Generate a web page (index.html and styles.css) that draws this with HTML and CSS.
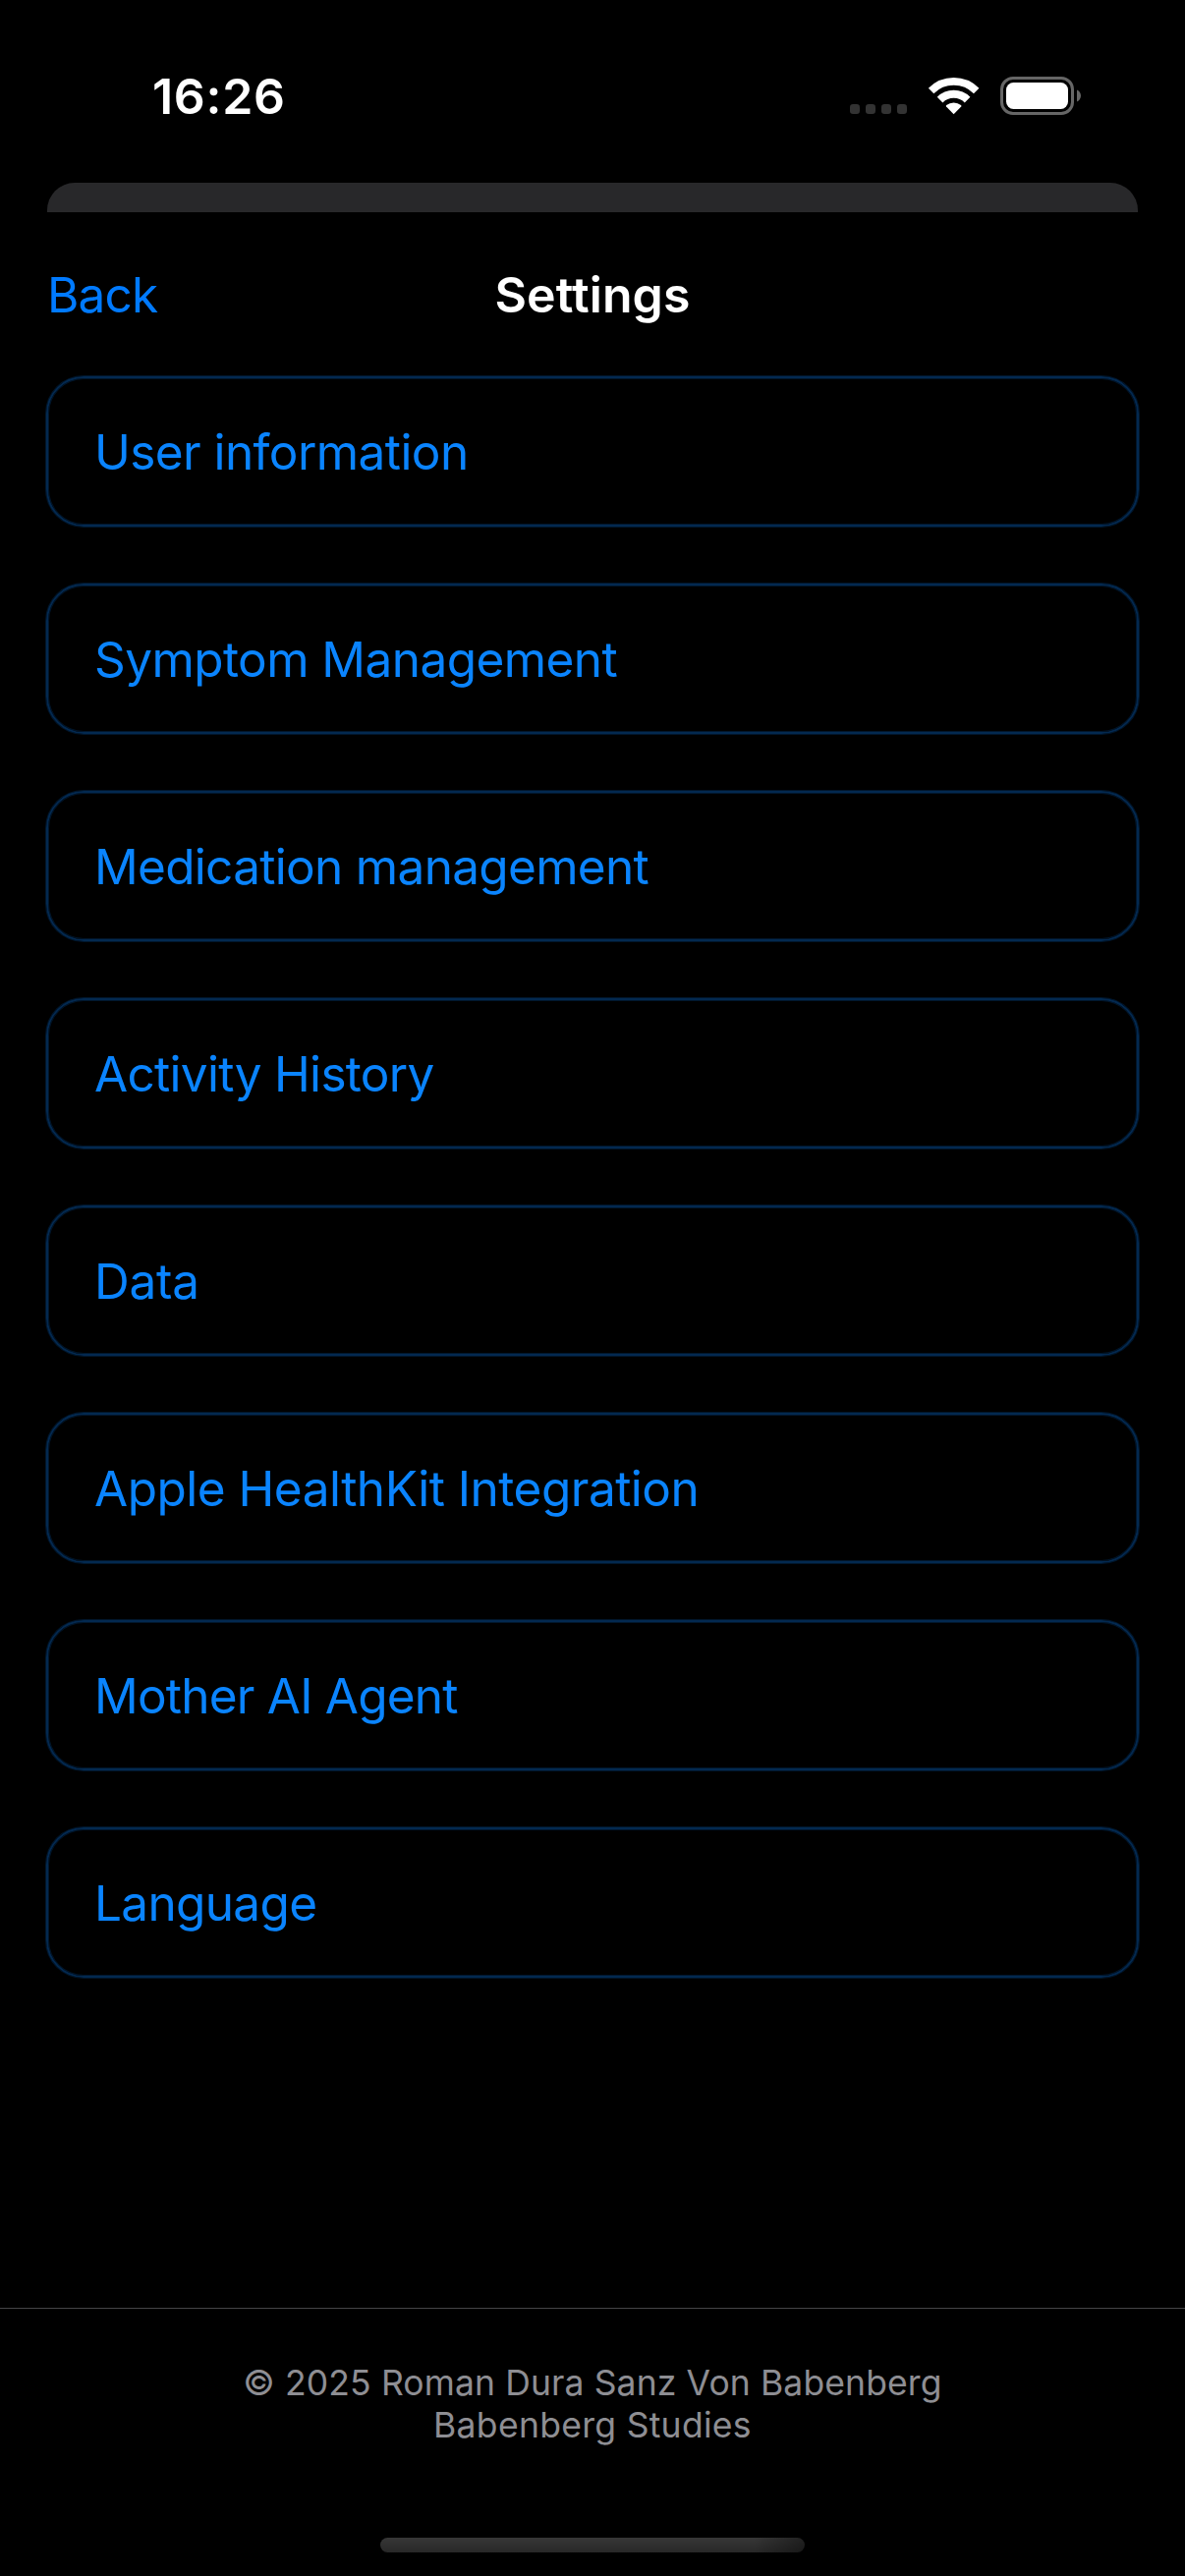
FILE: index.html
```html
<!DOCTYPE html>
<html lang="en">
<head>
<meta charset="utf-8">
<title>Settings</title>
<link rel="stylesheet" href="styles.css">
</head>
<body>
<div class="screen">
  <div class="status">
    <span class="time">16:26</span>
    <svg class="indicators" width="236" height="39" viewBox="865 78 236 39" aria-hidden="true">
      <g fill="#333">
        <rect x="865" y="106" width="10" height="10" rx="3.2"/>
        <rect x="881" y="106" width="10" height="10" rx="3.2"/>
        <rect x="897" y="106" width="10" height="10" rx="3.2"/>
        <rect x="913" y="106" width="10" height="10" rx="3.2"/>
      </g>
      <g fill="none" stroke="#fff">
        <path stroke-width="7.7" d="M947.6 92.5A32.6 32.6 0 0 1 993.7 92.5"/>
        <path stroke-width="8" d="M956.6 101.6A19.8 19.8 0 0 1 984.6 101.6"/>
      </g>
      <path fill="#fff" d="M970.6 116.2L963 108.6Q962.4 107.8 963.2 107.1A11.6 11.6 0 0 1 978 107.1Q978.8 107.8 978.2 108.6Z"/>
      <rect x="1019.5" y="79.5" width="72" height="36" rx="11.5" fill="none" stroke="#666" stroke-width="3"/>
      <rect x="1024" y="84" width="63" height="27" rx="7.5" fill="#fff"/>
      <path fill="#666" d="M1096 91.5C1098.6 92.6 1100 95 1100 97.5C1100 100 1098.6 102.4 1096 103.5Z"/>
    </svg>
  </div>
  <div class="behind"></div>
  <header class="nav">
    <a class="back">Back</a>
    <h1 class="title">Settings</h1>
  </header>
  <nav class="list">
    <a class="card t-user">User information</a>
    <a class="card t-symptom">Symptom Management</a>
    <a class="card t-medication">Medication management</a>
    <a class="card t-activity">Activity History</a>
    <a class="card t-data">Data</a>
    <a class="card t-health">Apple HealthKit Integration</a>
    <a class="card t-agent">Mother AI Agent</a>
    <a class="card t-language">Language</a>
  </nav>
  <footer class="footer">
    <div class="copyright">© 2025 Roman Dura Sanz Von Babenberg</div>
    <div class="studio">Babenberg Studies</div>
    <div class="home"></div>
  </footer>
</div>
</body>
</html>
```
FILE: styles.css
```css
* { box-sizing: border-box; }

body {
  margin: 0;
  background: #000;
  font-family: Inter, "Liberation Sans", sans-serif;
}

.screen {
  display: flex;
  flex-direction: column;
  width: 1206px;
  height: 2622px;
  overflow: hidden;
  background: #000;
}

.status {
  display: flex;
  align-items: center;
  justify-content: space-between;
  height: 186px;
  padding: 9px 105px 0 155px;
}

.time {
  color: #fff;
  font-size: 50px;
  font-weight: 600;
  line-height: 60px;
  letter-spacing: 0.7px;
}

.indicators { display: block; }

.behind {
  height: 30px;
  margin: 0 48px;
  border-radius: 28px 28px 0 0;
  background: #28282a;
}

.nav {
  display: grid;
  grid-template-columns: 1fr auto 1fr;
  align-items: center;
  height: 167px;
  padding: 0 48px;
}

.back {
  padding-top: 1px;
  color: #007aff;
  font-size: 49.5px;
  line-height: 60px;
  letter-spacing: -0.8px;
}

.title {
  margin: 0;
  color: #fff;
  font-size: 50px;
  font-weight: 600;
  line-height: 60px;
  letter-spacing: 0.1px;
}

.list {
  display: flex;
  flex-direction: column;
  gap: 58px;
  padding: 0 47px;
}

.card {
  display: flex;
  align-items: center;
  height: 153px;
  padding: 1px 47px 0;
  border: 2px solid #032950;
  border-radius: 38px;
  box-shadow: 0 0 0 1px #01162b, inset 0 0 0 1px #01162b;
  color: #0a84ff;
  font-size: 49.5px;
  line-height: 60px;
}

.t-user { letter-spacing: -0.58px; }
.t-symptom { letter-spacing: -0.57px; }
.t-medication { letter-spacing: -0.69px; }
.t-activity { letter-spacing: -0.7px; }
.t-data { letter-spacing: -0.27px; }
.t-health { letter-spacing: -0.5px; }
.t-agent { letter-spacing: -0.78px; }
.t-language { letter-spacing: -0.66px; }

.footer {
  display: flex;
  flex-direction: column;
  align-items: center;
  flex: 1;
  margin-top: 336px;
  padding: 54px 0 24px;
  border-top: 1px solid #444446;
  color: #8e8e93;
  font-size: 35.5px;
  line-height: 43px;
}

.copyright { letter-spacing: 0.12px; }
.studio { letter-spacing: 0.3px; }

.home {
  width: 432px;
  height: 15px;
  margin-top: auto;
  border-radius: 7.5px;
  background:
    linear-gradient(90deg, transparent 88%, rgba(0, 0, 0, 0.4)),
    linear-gradient(#373737, #282828);
}
```
